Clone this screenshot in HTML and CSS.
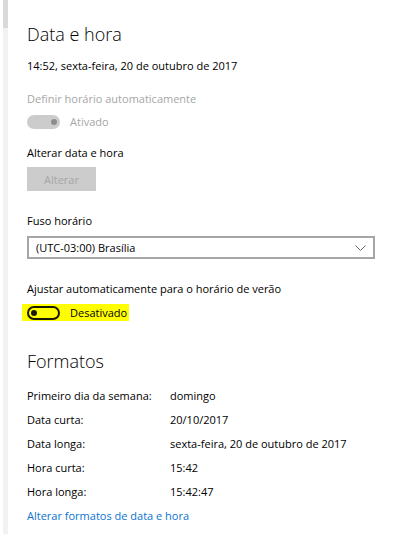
FILE: index.html
```html
<!DOCTYPE html>
<html lang="pt-BR">
<head>
    <meta charset="UTF-8">
    <meta name="viewport" content="width=device-width, initial-scale=1.0">
    <title>Data e hora</title>
    <link rel="stylesheet" href="styles.css">
</head>
<body>
    <div class="rail"><div class="thumb"></div></div>

    <main class="page">
        <h1>Data e hora</h1>
        <p class="now">14:52, sexta-feira, 20 de outubro de 2017</p>

        <p class="label muted">Definir horário automaticamente</p>
        <div class="switch-row">
            <span class="switch on disabled"><span class="knob"></span></span>
            <span class="muted">Ativado</span>
        </div>

        <p class="label label-gap">Alterar data e hora</p>
        <button class="btn" disabled>Alterar</button>

        <p class="label section-gap">Fuso horário</p>
        <div class="select">
            <span>(UTC-03:00) Brasília</span>
            <svg width="11" height="6" viewBox="0 0 11 6"><path d="M0.5 0.5 L5.5 5.5 L10.5 0.5" fill="none" stroke="#666" stroke-width="1"/></svg>
        </div>

        <p class="label section-gap">Ajustar automaticamente para o horário de verão</p>
        <div class="switch-row highlight">
            <span class="switch off"><span class="knob"></span></span>
            <span>Desativado</span>
        </div>

        <h2>Formatos</h2>
        <div class="formats">
            <div class="row"><span class="key">Primeiro dia da semana:</span><span>domingo</span></div>
            <div class="row"><span class="key">Data curta:</span><span>20/10/2017</span></div>
            <div class="row"><span class="key">Data longa:</span><span>sexta-feira, 20 de outubro de 2017</span></div>
            <div class="row"><span class="key">Hora curta:</span><span>15:42</span></div>
            <div class="row"><span class="key">Hora longa:</span><span>15:42:47</span></div>
            <div class="row"><a href="#" class="link">Alterar formatos de data e hora</a></div>
        </div>
    </main>
</body>
</html>
```

FILE: styles.css
```css
body {
    margin: 0;
    display: flex;
    min-height: 534px;
    background-color: #ffffff;
    color: #000000;
    font-family: "Open Sans", "Noto Sans", Arial, sans-serif;
    font-size: 11px;
    line-height: 16px;
}
.rail {
    width: 5px;
    margin-left: 3px;
    background-color: #f2f2f2;
}
.thumb {
    height: 28px;
    background-color: #d9d9d9;
}
.page {
    padding: 22px 0 0 19px;
    flex: 1;
}
h1, h2 {
    margin: 0;
    font-weight: 300;
    font-size: 18px;
    line-height: 24px;
}
h2 {
    margin-top: 28px;
}
p {
    margin: 0;
}
.now {
    margin-top: 12px;
}
.label {
    margin-top: 17px;
}
.label-gap {
    margin-top: 15px;
}
.section-gap {
    margin-top: 22px;
}
.muted {
    color: #a6a6a6;
}
.switch-row {
    display: flex;
    align-items: center;
    gap: 10px;
    margin-top: 7px;
    height: 16px;
}
.switch {
    box-sizing: border-box;
    width: 33px;
    height: 14px;
    border-radius: 7px;
    display: flex;
    align-items: center;
    padding: 0 3px;
}
.switch .knob {
    width: 6px;
    height: 6px;
    border-radius: 50%;
}
.switch.disabled {
    background-color: #cccccc;
    justify-content: flex-end;
}
.switch.disabled .knob {
    background-color: #8c8c8c;
}
.switch.off {
    border: 2px solid #1a1a00;
    padding: 0 2px;
}
.switch.off .knob {
    background-color: #1a1a00;
}
.highlight {
    align-self: flex-start;
    width: fit-content;
    margin-left: -5px;
    padding: 0 2px 0 5px;
    height: 17px;
    background-color: #ffff00;
}
.btn {
    display: block;
    margin-top: 6px;
    width: 69px;
    height: 24px;
    border: none;
    background-color: #cccccc;
    color: #a6a6a6;
    font-family: inherit;
    font-size: 11px;
    padding: 0;
}
.select {
    box-sizing: border-box;
    width: 348px;
    height: 23px;
    margin-top: 7px;
    border: 2px solid #a6a6a6;
    display: flex;
    align-items: center;
    justify-content: space-between;
    padding: 0 7px 0 7px;
}
.formats {
    margin-top: 11px;
}
.row {
    display: flex;
    line-height: 24px;
}
.key {
    width: 143px;
}
.link {
    color: #0a74d0;
    text-decoration: none;
}
```
